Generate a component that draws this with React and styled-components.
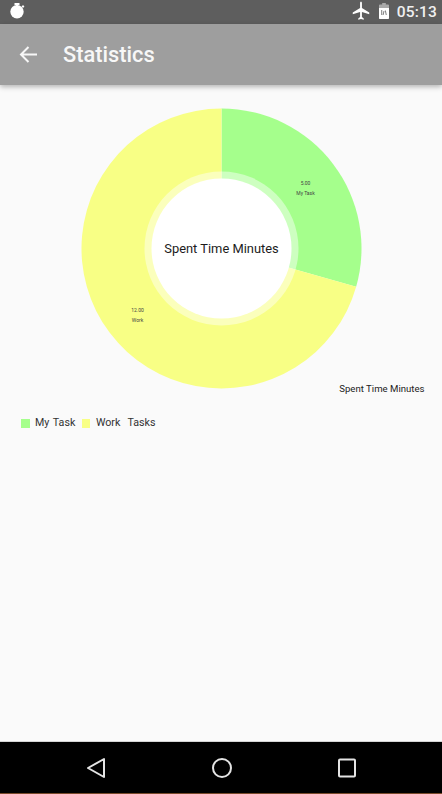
import React from "react";
import styled, { createGlobalStyle } from "styled-components";

const Global = createGlobalStyle`
  html, body { margin: 0; padding: 0; background: #fafafa; }
  #root { width: 442px; height: 794px; }
`;

const Screen = styled.div`
  width: 442px;
  height: 794px;
  display: flex;
  flex-direction: column;
  overflow: hidden;
  font-family: Roboto, "Liberation Sans", sans-serif;
  background: #fafafa;
`;

const StatusBar = styled.div`
  height: 24px;
  flex: none;
  background: #5e5e5e;
  display: flex;
  align-items: center;
  justify-content: space-between;
  padding: 0 5px 0 10px;
  color: #fff;
`;

const StatusRight = styled.div`
  display: flex;
  align-items: center;
  gap: 8px;
`;

const PlaneIcon = styled.svg`
  width: 22px;
  height: 22px;
  margin-right: -1.5px;
  fill: #fff;
`;

const Clock = styled.span`
  font-size: 15.5px;
  font-weight: 500;
  color: #f0f0f0;
  letter-spacing: 0.2px;
`;

const Toolbar = styled.header`
  height: 61px;
  flex: none;
  background: #9e9e9e;
  display: flex;
  align-items: center;
  padding-left: 19px;
  gap: 25px;
  box-shadow: 0 2px 5px rgba(0, 0, 0, 0.28);
  position: relative;
  z-index: 1;
`;

const Title = styled.h1`
  margin: 0;
  font-size: 21.8px;
  font-weight: 500;
  color: #f7f7f7;
`;

const Main = styled.main`
  flex: 1;
  min-height: 0;
  display: flex;
  flex-direction: column;
  background: #fafafa;
`;

const ChartFrame = styled.div`
  height: 330px;
  flex: none;
`;

const Legend = styled.div`
  display: flex;
  align-items: center;
  padding: 1px 0 0 21px;
  font-size: 10.7px;
  line-height: 14px;
  color: #333;
`;

const Swatch = styled.span`
  width: 8.5px;
  height: 9px;
  flex: none;
  margin-right: 5.5px;
  background: ${(p) => p.$color};
`;

const LegendLabel = styled.span`
  margin-right: 6.5px;
  white-space: pre;
  word-spacing: 1px;
`;

const NavBar = styled.nav`
  height: 53px;
  flex: none;
  background: #000;
  border-top: 1px solid #d4d4d4;
  border-bottom: 1px solid #7a4a2a;
  box-sizing: border-box;
  display: flex;
  align-items: center;
  padding-left: 85px;
  gap: 103.5px;
`;

const NavIcon = styled.svg`
  width: 22px;
  height: 22px;
  flex: none;
  fill: none;
  stroke: #e4e4e4;
  stroke-width: 2;
  stroke-linejoin: round;
`;

const GREEN = "#a5ff8c";
const YELLOW = "#f8ff85";
const CX = 221.5;
const CY = 163.5;

function polar(r, deg) {
  const a = ((deg - 90) * Math.PI) / 180;
  return [CX + r * Math.cos(a), CY + r * Math.sin(a)];
}

function slice(r, from, to) {
  const [x1, y1] = polar(r, from);
  const [x2, y2] = polar(r, to);
  const large = to - from > 180 ? 1 : 0;
  return `M${CX} ${CY}L${x1} ${y1}A${r} ${r} 0 ${large} 1 ${x2} ${y2}Z`;
}

const SPLIT = (5 / 17) * 360;

function Chart() {
  return (
    <svg width="442" height="330" style={{ display: "block" }}>
      <path d={slice(140, 0, SPLIT)} fill={GREEN} />
      <path d={slice(140, SPLIT, 360)} fill={YELLOW} />
      <circle cx={CX} cy={CY} r="77" fill="#fff" fillOpacity="0.45" />
      <circle cx={CX} cy={CY} r="70" fill="#fff" />
      <text x={CX} y={CY + 4.5} textAnchor="middle" fontSize="12.9" fill="#1c1c1c">Spent Time Minutes</text>
      <g fontSize="5" fill="#444" textAnchor="middle">
        <text x="305.5" y="100">5.00</text>
        <text x="305.5" y="109.500">My Task</text>
        <text x="137.500" y="227">12.00</text>
        <text x="137.500" y="236.500">Work</text>
      </g>
      <text x="424.5" y="306.500" textAnchor="end" fontSize="9.6" fill="#222">Spent Time Minutes</text>
    </svg>
  );
}

export default function App() {
  return (
    <Screen>
      <Global />
      <StatusBar>
        <svg width="15" height="18" viewBox="0 0 15 18">
          <rect x="4.500" y="0" width="5" height="2" fill="#fff" />
          <rect x="6" y="1" width="2" height="2" fill="#fff" />
          <rect x="12" y="2.500" width="2" height="2" fill="#fff" transform="rotate(45 13 3.500)" />
          <circle cx="7" cy="8.700" r="6.700" fill="#fff" />
        </svg>
        <StatusRight>
          <PlaneIcon viewBox="0 1.5 24 24">
            <path d="M21 16v-2l-8-5V3.500C13 2.670 12.330 2 11.500 2h1C11.670 2 11 2.670 11 3.500V9l-8 5v2l8-2.500V19l-2 1.500V22l3-1 3 1v-1.500L13 19v-5.500l8 2.500z" />
          </PlaneIcon>
          <svg width="10" height="20" viewBox="0 -1 11 20" preserveAspectRatio="none">
            <path d="M3.500 0h4v1.500H10a1 1 0 0 1 1 1V15a1 1 0 0 1-1 1H1a1 1 0 0 1-1-1V2.500a1 1 0 0 1 1-1h2.500z" fill="#aaa" />
            <path d="M0 5h11v10a1 1 0 0 1-1 1H1a1 1 0 0 1-1-1z" fill="#fff" />
            <path d="M3 7v5M5.500 8l-1 4M7 7.500l1 4.500" stroke="#777" strokeWidth="1" fill="none" />
          </svg>
          <Clock>05:13</Clock>
        </StatusRight>
      </StatusBar>
      <Toolbar>
        <svg width="19" height="19" viewBox="0 0 19 19" fill="none" stroke="#f7f7f7" strokeWidth="2">
          <path d="M18 9.500H2M9.500 2l-7.500 7.500 7.500 7.500" />
        </svg>
        <Title>Statistics</Title>
      </Toolbar>
      <Main>
        <ChartFrame>
          <Chart />
        </ChartFrame>
        <Legend>
          <Swatch $color={GREEN} />
          <LegendLabel>My Task</LegendLabel>
          <Swatch $color={YELLOW} />
          <LegendLabel>{"Work  Tasks"}</LegendLabel>
        </Legend>
      </Main>
      <NavBar>
        <NavIcon viewBox="0 0 22 22">
          <path d="M19 2v18L3 11z" />
        </NavIcon>
        <NavIcon viewBox="0 0 22 22">
          <circle cx="11" cy="11" r="9" />
        </NavIcon>
        <NavIcon viewBox="0 0 22 22">
          <rect x="3" y="2.500" width="16" height="17" rx="1" />
        </NavIcon>
      </NavBar>
    </Screen>
  );
}
